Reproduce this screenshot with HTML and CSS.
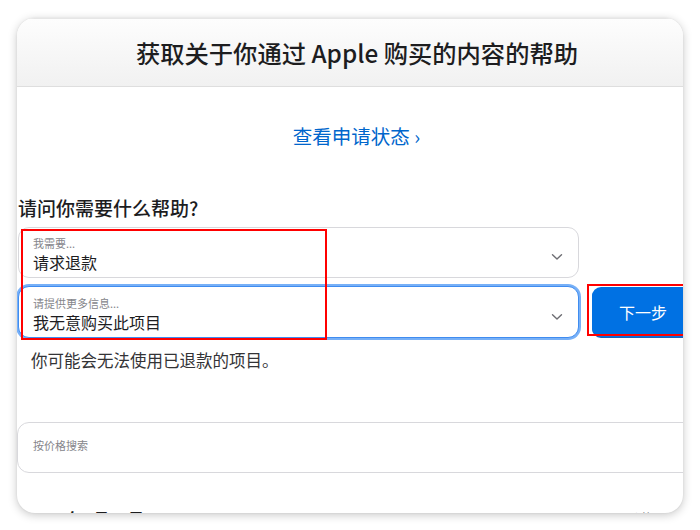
FILE: index.html
```html
<!DOCTYPE html>
<html lang="zh-CN">
<head>
<meta charset="utf-8">
<title>获取帮助</title>
<link rel="stylesheet" href="styles.css">
</head>
<body>
<div class="window">
  <header class="topbar">
    <h1 class="title">获取关于你通过 Apple 购买的内容的帮助</h1>
  </header>
  <main class="content">
    <p class="status-link"><a href="#">查看申请状态 ›</a></p>
    <h2 class="question">请问你需要什么帮助?</h2>
    <div class="select">
      <div class="select-text">
        <span class="select-label">我需要...</span>
        <span class="select-value">请求退款</span>
      </div>
      <svg class="chevron" width="12" height="8" viewBox="0 0 12 8"><path d="M1.5 1.8 L6 6 L10.5 1.8" fill="none" stroke="#6e6e73" stroke-width="1.4" stroke-linecap="round" stroke-linejoin="round"/></svg>
    </div>
    <div class="row">
      <div class="select focused">
        <div class="select-text">
          <span class="select-label">请提供更多信息...</span>
          <span class="select-value">我无意购买此项目</span>
        </div>
        <svg class="chevron" width="12" height="8" viewBox="0 0 12 8"><path d="M1.5 1.8 L6 6 L10.5 1.8" fill="none" stroke="#6e6e73" stroke-width="1.4" stroke-linecap="round" stroke-linejoin="round"/></svg>
      </div>
      <button class="next">下一步</button>
    </div>
    <p class="note">你可能会无法使用已退款的项目。</p>
    <div class="search"><span class="search-ph">按价格搜索</span></div>
    <div class="date-row">
      <span class="date">2025年7月16日</span>
      <span class="date-side">价格</span>
    </div>
  </main>
  <div class="mark mark-form"></div>
  <div class="mark mark-btn"></div>
</div>
</body>
</html>
```
FILE: styles.css
```css
html, body {
  margin: 0;
  padding: 0;
  background: #ffffff;
}
body {
  width: 700px;
  height: 530px;
  overflow: hidden;
  font-family: "Noto Sans CJK SC", "Noto Sans", sans-serif;
  color: #1d1d1f;
}
.window {
  position: relative;
  margin: 18px 0 0 17px;
  width: 666px;
  height: 495px;
  border-radius: 18px;
  overflow: hidden;
  background: #ffffff;
  box-shadow: 0 2px 10px rgba(0, 0, 0, 0.22), 0 0 2px rgba(0, 0, 0, 0.08);
}
.topbar {
  height: 67px;
  padding-left: 14px;
  border-top: 1px solid #e6e6e6;
  border-bottom: 1px solid #dedede;
  background: linear-gradient(#fdfdfd, #f1f1f1);
  display: flex;
  align-items: center;
  justify-content: center;
}
.title {
  margin: 0;
  font-size: 24.3px;
  font-weight: 500;
  color: #1d1d1f;
}
.content {
  padding-left: 1px;
}
.status-link {
  margin: 35px 0 0;
  text-align: center;
  font-size: 19.5px;
  line-height: 28px;
  padding-left: 12px;
}
.status-link a {
  color: #0066cc;
  text-decoration: none;
}
.question {
  margin: 45px 0 0;
  font-size: 19px;
  line-height: 26px;
  font-weight: 500;
}
.select {
  flex: none;
  box-sizing: border-box;
  margin-top: 6px;
  width: 561px;
  height: 51px;
  border: 1px solid #d8d8dc;
  border-radius: 11px;
  padding: 8px 14px 0 14px;
  display: flex;
  align-items: flex-start;
  justify-content: space-between;
  background: #fff;
}
.select-text {
  display: flex;
  flex-direction: column;
  gap: 2px;
}
.select-label {
  display: block;
  font-size: 11px;
  line-height: 14px;
  color: #86868b;
}
.select-value {
  display: block;
  font-size: 16px;
  line-height: 20px;
  color: #1d1d1f;
}
.chevron {
  margin-top: 17px;
  margin-right: 1px;
}
.row {
  display: flex;
  align-items: flex-start;
  gap: 13px;
  margin-top: 8px;
}
.select.focused {
  margin-top: 0;
  height: 52px;
  padding-top: 9px;
  border: 1px solid #3f8cf0;
  box-shadow: 0 0 0 2px #77b0f7;
}
.next {
  flex: none;
  width: 102px;
  height: 50px;
  margin-top: 1px;
  border: none;
  border-radius: 9px;
  background: #0071e3;
  box-shadow: 0 1px 0 #1b5fb8;
  color: #ffffff;
  font-family: inherit;
  font-size: 16px;
}
.note {
  margin: 11px 0 0 13px;
  font-size: 16.5px;
  line-height: 22px;
  color: #333336;
}
.search {
  box-sizing: border-box;
  margin: 51px 0 0 -1px;
  width: 700px;
  height: 51px;
  border: 1px solid #d8d8dc;
  border-radius: 12px;
  padding: 15px 15px 0;
}
.search-ph {
  display: block;
  font-size: 11px;
  line-height: 15px;
  color: #86868b;
}
.date-row {
  margin-top: 34px;
  display: flex;
  justify-content: space-between;
  padding: 0 30px 0 12px;
}
.date {
  font-size: 16px;
  line-height: 22px;
  font-weight: 700;
}
.date-side {
  font-size: 12px;
  line-height: 22px;
  color: #86868b;
}
.mark {
  position: absolute;
  border: 2px solid #ff0000;
  box-sizing: border-box;
  pointer-events: none;
}
.mark-form {
  left: 4px;
  top: 211px;
  width: 306px;
  height: 111px;
}
.mark-btn {
  left: 570px;
  top: 266px;
  width: 110px;
  height: 52px;
}
```
